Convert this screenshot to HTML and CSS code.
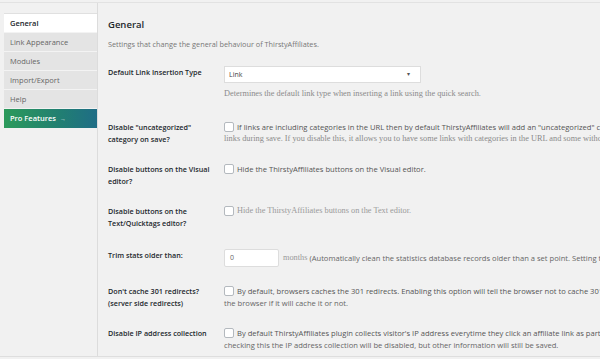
FILE: index.html
```html
<!DOCTYPE html>
<html lang="en">
<head>
    <meta charset="UTF-8">
    <title>ThirstyAffiliates Settings</title>
    <link rel="stylesheet" href="styles.css">
</head>
<body>
    <div class="wrap">
        <ul class="tabs">
            <li class="tab active">General</li>
            <li class="tab">Link Appearance</li>
            <li class="tab">Modules</li>
            <li class="tab">Import/Export</li>
            <li class="tab">Help</li>
            <li class="tab pro">Pro Features <span class="arrow">&rarr;</span></li>
        </ul>

        <div class="panel">
            <h2>General</h2>
            <p class="intro">Settings that change the general behaviour of ThirstyAffiliates.</p>

            <div class="form">
                <div class="row">
                    <div class="label">Default Link Insertion Type</div>
                    <div class="field">
                        <div class="select">Link <span class="caret">&#9662;</span></div>
                        <p class="desc serif spaced">Determines the default link type when inserting a link using the quick search.</p>
                    </div>
                </div>

                <div class="row">
                    <div class="label">Disable "uncategorized" category on save?</div>
                    <div class="field">
                        <div class="check"><span class="box"></span>If links are including categories in the URL then by default ThirstyAffiliates will add an "uncategorized" category to</div>
                        <p class="desc serif">links during save. If you disable this, it allows you to have some links with categories in the URL and some without.</p>
                    </div>
                </div>

                <div class="row">
                    <div class="label">Disable buttons on the Visual editor?</div>
                    <div class="field">
                        <div class="check"><span class="box"></span>Hide the ThirstyAffiliates buttons on the Visual editor.</div>
                    </div>
                </div>

                <div class="row">
                    <div class="label">Disable buttons on the Text/Quicktags editor?</div>
                    <div class="field">
                        <div class="check serif light"><span class="box"></span>Hide the ThirstyAffiliates buttons on the Text editor.</div>
                    </div>
                </div>

                <div class="row trim">
                    <div class="label">Trim stats older than:</div>
                    <div class="field inline">
                        <div class="number">0</div>
                        <span class="serif light">months</span><span class="muted">(Automatically clean the statistics database records older than a set point. Setting this to 0 will disable it.)</span>
                    </div>
                </div>

                <div class="row">
                    <div class="label">Don't cache 301 redirects? (server side redirects)</div>
                    <div class="field">
                        <div class="check"><span class="box"></span>By default, browsers caches the 301 redirects. Enabling this option will tell the browser not to cache 301 redirects. Be aware that it is still up to</div>
                        <p class="desc">the browser if it will cache it or not.</p>
                    </div>
                </div>

                <div class="row">
                    <div class="label">Disable IP address collection</div>
                    <div class="field">
                        <div class="check"><span class="box"></span>By default ThirstyAffiliates plugin collects visitor's IP address everytime they click an affiliate link as part of the statistics information. By</div>
                        <p class="desc">checking this the IP address collection will be disabled, but other information will still be saved.</p>
                    </div>
                </div>
            </div>
        </div>
    </div>
</body>
</html>
```

FILE: styles.css
```css
body {
    margin: 0;
    width: 600px;
    height: 359px;
    overflow: hidden;
    background-color: #f1f1f1;
    font-family: "Open Sans", "Liberation Sans", sans-serif;
    font-size: 7px;
    color: #444;
}
.wrap {
    display: flex;
    margin-top: 2px;
    border-top: 1px solid #e2e2e2;
    border-bottom: 1px solid #dedede;
    height: 353px;
    white-space: nowrap;
}
.tabs {
    list-style: none;
    margin: 10px 0 0 4px;
    padding: 0;
    width: 93px;
    flex-shrink: 0;
}
.tab {
    height: 18px;
    line-height: 18px;
    padding-left: 6px;
    background-color: #e4e4e4;
    border-bottom: 1px solid #f3f3f3;
    color: #666;
    font-size: 7.5px;
}
.tab.active {
    background-color: #fff;
    border-top: 1px solid #e0e0e0;
    color: #23282d;
    font-weight: 600;
}
.tab.pro {
    background: linear-gradient(90deg, #2c9a5b, #217f72 60%, #1f6d86);
    color: #fff;
    font-weight: 600;
    border-bottom: none;
    height: 19px;
}
.tab.pro .arrow {
    font-size: 6px;
    font-weight: 400;
    opacity: 0.8;
    margin-left: 2px;
}
.panel {
    flex: 1;
    border-left: 1px solid #dcdcdc;
    padding-left: 10px;
    overflow: hidden;
}
h2 {
    margin: 16px 0 0;
    font-size: 9.5px;
    line-height: 12px;
    font-weight: 600;
    color: #23282d;
}
.intro {
    margin: 8px 0 0;
    font-size: 7.3px;
    line-height: 10px;
    color: #777;
}
.form {
    margin-top: 8px;
}
.row {
    display: grid;
    grid-template-columns: 108px 1fr;
    column-gap: 8px;
    padding: 9px 0;
}
.row.trim {
    padding-top: 11px;
}
.label {
    font-weight: 600;
    font-size: 7.2px;
    line-height: 12px;
    color: #23282d;
    white-space: normal;
}
.field {
    font-size: 7.6px;
    line-height: 12px;
    color: #555;
}
.select {
    position: relative;
    width: 191px;
    height: 15px;
    line-height: 15px;
    padding-left: 4px;
    background-color: #fff;
    border: 1px solid #ddd;
    color: #444;
    font-size: 7px;
}
.caret {
    position: absolute;
    right: 10px;
    top: 0;
    font-size: 6px;
    color: #555;
}
.desc {
    margin: 5px 0 0;
    color: #666;
}
.desc.spaced {
    margin-bottom: 3px;
}
.serif {
    font-family: "Liberation Serif", "DejaVu Serif", serif;
    font-size: 8.3px;
    color: #8a8a8a;
}
.light {
    color: #999;
}
.check {
    display: flex;
    align-items: center;
}
.box {
    width: 8px;
    height: 8px;
    border: 1px solid #b4b9be;
    border-radius: 2px;
    background-color: #fff;
    flex-shrink: 0;
    margin-right: 3px;
}
.check + .desc {
    margin-top: 0;
}
.inline {
    display: flex;
    align-items: center;
}
.number {
    width: 48px;
    height: 16px;
    line-height: 16px;
    padding-left: 5px;
    background-color: #fff;
    border: 1px solid #ddd;
    border-radius: 2px;
    color: #666;
    margin-right: 4px;
    font-size: 7px;
}
.muted {
    color: #666;
    margin-left: 2px;
}
```
